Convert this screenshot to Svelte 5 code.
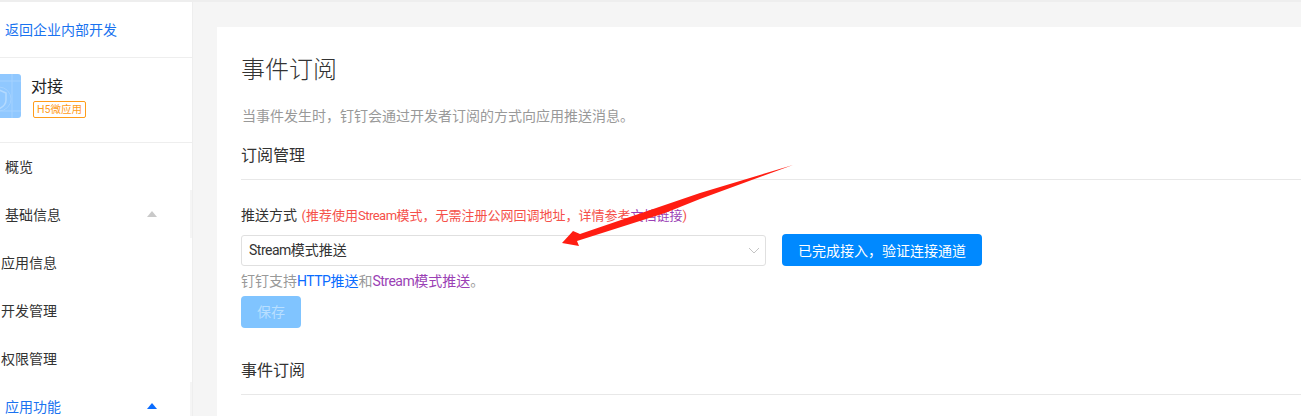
<script>
  const menu = [
    { label: '概览', top: true },
    { label: '基础信息', top: true, arrow: 'grey', edge: true },
    { label: '应用信息' },
    { label: '开发管理' },
    { label: '权限管理' },
    { label: '应用功能', top: true, arrow: 'blue', active: true, edge: true }
  ];
</script>

<div class="page">
  <aside class="sidebar">
    <a class="back">返回企业内部开发</a>
    <div class="app-info">
      <svg class="logo" viewBox="0 0 44 44" aria-hidden="true">
        <rect width="44" height="44" rx="3" fill="#90c8ff" />
        <path d="M0 7H44M0 37H44M35 0V44" stroke="#a4d2ff" stroke-width="1" fill="none" />
        <circle cx="22" cy="25" r="12" stroke="#a4d2ff" stroke-width="1" fill="none" />
        <path d="M15 19l7-3 7 3v7c0 4-3 7-7 9-4-2-7-5-7-9z" stroke="#b4daff" stroke-width="1.5" fill="none" />
      </svg>
      <div class="app-text">
        <div class="app-name">对接</div>
        <span class="tag">H5微应用</span>
      </div>
    </div>
    <nav>
      {#each menu as item}
        <div class="item" class:top={item.top} class:active={item.active} class:edge={item.edge}>
          <span>{item.label}</span>
          {#if item.arrow}
            <i class="arrow {item.arrow}"></i>
          {/if}
        </div>
      {/each}
    </nav>
  </aside>

  <main class="main">
    <section class="card">
      <h1>事件订阅</h1>
      <p class="desc">当事件发生时，钉钉会通过开发者订阅的方式向应用推送消息。</p>
      <h2 class="manage">订阅管理</h2>

      <div class="label">
        推送方式 <span class="tip">(推荐使用<span class="latin">Stream</span>模式，无需注册公网回调地址，详情参考<span class="visited">文档链接</span>)</span>
      </div>
      <div class="row">
        <div class="select">
          <span><span class="latin">Stream</span>模式推送</span>
          <svg class="chevron" viewBox="0 0 12 7" aria-hidden="true">
            <path d="M1 1l5 5 5-5" fill="none" stroke="#c4c4c4" stroke-width="1" />
          </svg>
        </div>
        <button class="verify">已完成接入，验证连接通道</button>
      </div>
      <div class="hint">钉钉支持<span class="link"><span class="latin">HTTP</span>推送</span>和<span class="visited"><span class="latin">Stream</span>模式推送</span>。</div>
      <button class="save" disabled>保存</button>
      <h2 class="events">事件订阅</h2>
    </section>
  </main>

  <!-- annotation drawn over the screenshot -->
  <svg class="annotation" viewBox="0 0 1301 416" aria-hidden="true">
    <path d="M793 165 700 193 580 234 573 231 562 243 579 246 577 241 665 213 700 199z" fill="#ff1d12" />
  </svg>
</div>

<style>
  :global(body) {
    margin: 0;
    background: #f5f5f5;
  }

  .page {
    position: relative;
    display: flex;
    width: 1301px;
    height: 416px;
    overflow: hidden;
    box-sizing: border-box;
    border-top: 2px solid #eeeeee;
    font-family: Roboto, "Noto Sans CJK SC", sans-serif;
    font-size: 14px;
    color: #333;
  }

  .sidebar {
    flex: none;
    width: 192px;
    background: #fff;
    border-right: 1px solid #eeeeee;
  }

  .back {
    display: flex;
    align-items: center;
    height: 56px;
    box-sizing: border-box;
    padding-left: 5px;
    padding-bottom: 2px;
    color: #1a73f0;
    border-bottom: 1px solid #eeeeee;
  }

  .app-info {
    display: flex;
    gap: 10px;
    height: 85px;
    box-sizing: border-box;
    padding-top: 16px;
    margin-left: -23px;
    border-bottom: 1px solid #eeeeee;
  }

  .logo {
    flex: none;
    width: 44px;
    height: 44px;
  }

  .app-name {
    font-size: 16px;
    line-height: 24px;
    margin-top: 1px;
    color: #222;
  }

  .tag {
    display: inline-block;
    margin-top: 2px;
    margin-left: 2px;
    padding: 0 3px;
    height: 15px;
    line-height: 15px;
    font-size: 10.5px;
    border: 1px solid #ff9c1a;
    border-radius: 2px;
    color: #ff9c1a;
  }

  nav {
    margin-top: -1px;
  }

  .item {
    position: relative;
    display: flex;
    align-items: center;
    justify-content: space-between;
    height: 48px;
    padding-left: 1px;
    padding-right: 35px;
    box-sizing: border-box;
    color: #333;
  }

  .item.top {
    padding-left: 5px;
  }

  .item.active {
    color: #1a73f0;
  }

  .item.edge {
    box-shadow: inset -2px 0 0 #f5f5f5;
  }

  .arrow {
    width: 0;
    height: 0;
    margin-bottom: 1px;
    border-left: 5px solid transparent;
    border-right: 5px solid transparent;
    border-bottom-width: 6px;
    border-bottom-style: solid;
  }

  .arrow.grey {
    border-bottom-color: #c9c9c9;
  }

  .arrow.blue {
    border-bottom-color: #0a6cff;
  }

  .main {
    flex: 1;
    min-width: 0;
    padding: 25px 0 0 24px;
  }

  .card {
    height: 420px;
    box-sizing: border-box;
    padding: 0 0 0 24px;
    background: #fff;
  }

  h1 {
    margin: 0;
    padding-top: 25px;
    font-size: 24px;
    font-weight: 300;
    line-height: 36px;
    color: #333;
  }

  .desc {
    margin: 17px 0 0 1px;
    line-height: 22px;
    color: #999;
  }

  h2 {
    margin: 0;
    font-size: 16px;
    font-weight: 400;
    line-height: 24px;
    border-bottom: 1px solid #e8e8e8;
    color: #333;
  }

  .manage {
    margin-top: 17px;
    padding-bottom: 11px;
  }

  .label {
    margin-top: 24px;
    line-height: 22px;
  }

  .tip {
    margin-left: 1px;
    font-size: 13px;
    color: #f5504a;
  }

  .latin {
    letter-spacing: -0.5px;
  }

  .visited {
    color: #9b3fb5;
  }

  .link {
    color: #0a6cff;
  }

  .row {
    display: flex;
    align-items: center;
    gap: 16px;
    margin-top: 7px;
    height: 32px;
  }

  .select {
    display: flex;
    align-items: center;
    justify-content: space-between;
    width: 525px;
    height: 31px;
    box-sizing: border-box;
    padding: 0 5px 2px 7px;
    border: 1px solid #e0e0e0;
    border-radius: 3px;
    background: #fff;
    color: #333;
  }

  .chevron {
    width: 12px;
    height: 7px;
    margin-top: 2px;
  }

  button {
    font: inherit;
    border: 0;
    border-radius: 4px;
    color: #fff;
  }

  .verify {
    width: 200px;
    height: 32px;
    padding: 0;
    background: #0089ff;
  }

  .hint {
    margin-top: 4px;
    line-height: 22px;
    color: #999;
  }

  .save {
    display: block;
    width: 60px;
    height: 32px;
    margin-top: 4px;
    padding: 0 0 2px;
    background: #80c4ff;
    color: #b8dfff;
  }

  .events {
    margin-top: 31px;
    padding-bottom: 11px;
  }

  .annotation {
    position: absolute;
    left: 0;
    top: -2px;
    width: 1301px;
    height: 416px;
    pointer-events: none;
  }
</style>
